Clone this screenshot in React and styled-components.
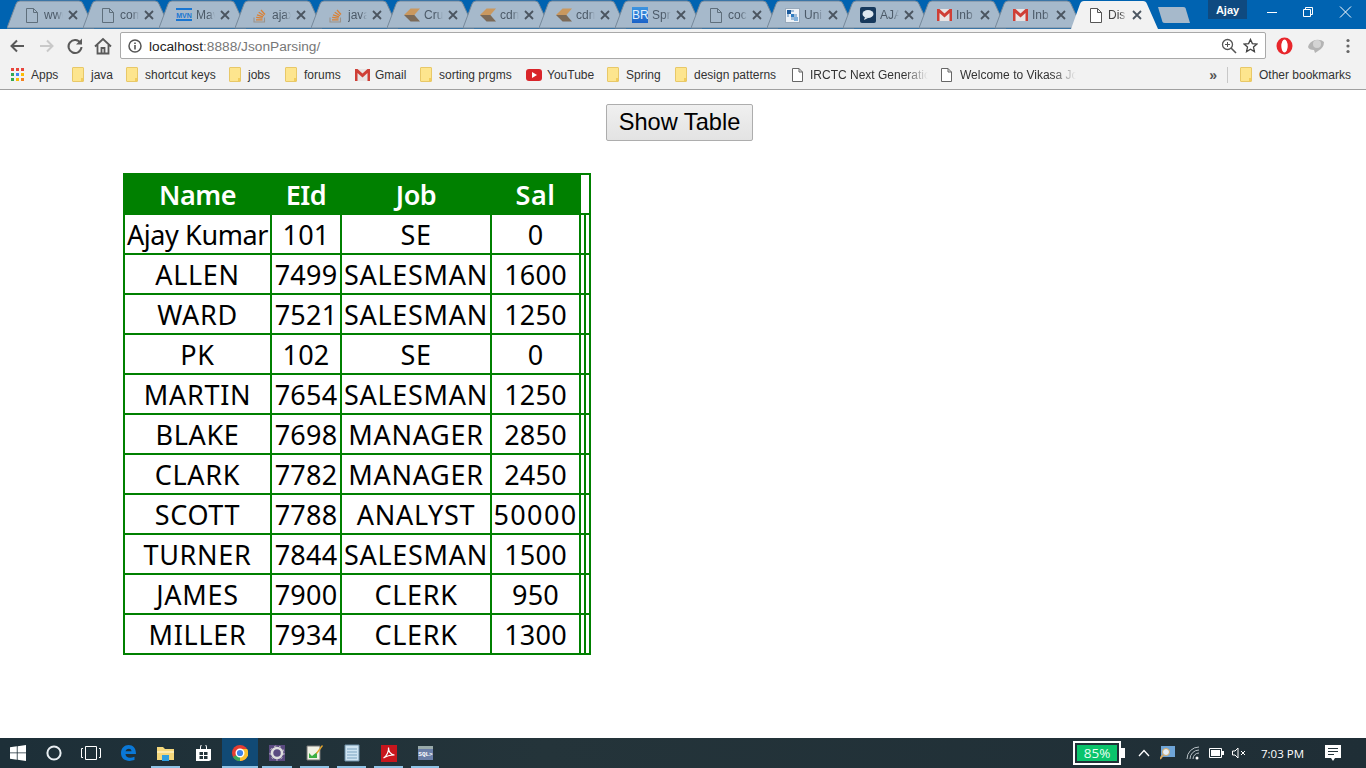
import React from "react";
import styled, { createGlobalStyle } from "styled-components";

const Global = createGlobalStyle`
  html, body { margin: 0; padding: 0; height: 100%; background: #fff; overflow: hidden; }
  #root { height: 100%; }
`;
const Page = styled.div`
  width: 1366px; height: 768px; display: flex; flex-direction: column;
  font-family: "Liberation Sans", Arial, sans-serif; overflow: hidden;
`;
const TabStrip = styled.div`
  height: 29px; flex: none; background: #0063b1; display: flex; padding-left: 7px; position: relative;
`;
const TabBox = styled.div`
  position: relative; width: 87px; height: 29px; margin-right: -11px; flex: none;
  z-index: ${p => (p.$active ? 3 : 1)};
`;
const TabShape = styled.svg`position: absolute; inset: 0;`;
const TabIcon = styled.div`
  position: absolute; left: 17px; top: 7px; width: 16px; height: 16px; display: flex; align-items: center; justify-content: center;
`;
const TabTitle = styled.span`
  position: absolute; left: 37px; top: 8px; width: 19px; overflow: hidden; white-space: nowrap;
  font-size: 12px; line-height: 15px; color: ${p => (p.$active ? "#444" : "#4c5a68")};
  -webkit-mask-image: linear-gradient(90deg, #000 65%, transparent 100%);
  mask-image: linear-gradient(90deg, #000 65%, transparent 100%);
`;
const TabClose = styled.svg`position: absolute; left: 61px; top: 10px;`;
const NewTab = styled.svg`position: absolute; left: 1157px; top: 6px; z-index: 1;`;
const Profile = styled.div`
  position: absolute; left: 1208px; top: 0; width: 39px; height: 19px; background: #0f4a80; color: #fff;
  font-size: 11px; font-weight: bold; display: flex; align-items: center; justify-content: center;
`;
const WinBtn = styled.svg`position: absolute; top: 5px;`;
const Toolbar = styled.div`
  height: 33px; flex: none; background: #f2f2f2; display: flex; align-items: center; position: relative; padding-left: 9px; box-sizing: border-box;
`;
const NavIcon = styled.svg`flex: none; margin-right: ${p => p.$mr || 0}px;`;
const Omnibox = styled.div`
  width: 1146px; height: 27px; box-sizing: border-box; background: #fff; border: 1px solid #a9a9a9; border-radius: 2px;
  display: flex; align-items: center; padding: 0 7px 0 7px; flex: none; margin: 0 10px 0 0;
`;
const Url = styled.span`
  flex: 1; margin-left: 7px; font-size: 13.7px; color: #777; white-space: nowrap; padding-top: 1px;
  b { font-weight: normal; color: #222; }
`;
const BookmarkBar = styled.div`
  height: 28px; flex: none; background: #f2f2f2; border-bottom: 1px solid #a0a0a0; box-sizing: border-box;
  display: flex; align-items: center; padding: 0 0 2px 11px; position: relative;
`;
const Bookmark = styled.div`
  width: ${p => p.$w}px; flex: none; display: flex; align-items: center; gap: ${p => p.$gap || 7}px;
  font-size: 12px; color: #333; white-space: nowrap; overflow: hidden;
`;
const FadeLabel = styled.span`
  width: ${p => p.$w}px; overflow: hidden;
  -webkit-mask-image: linear-gradient(90deg, #000 80%, transparent 100%);
  mask-image: linear-gradient(90deg, #000 80%, transparent 100%);
`;
const BarRight = styled.div`
  margin-left: auto; display: flex; align-items: center; font-size: 12px; color: #333;
`;
const Chevrons = styled.span`font-size: 14px; font-weight: bold; color: #555; width: 11px; text-align: right; margin-right: 10px; line-height: 14px;`;
const Sep = styled.div`width: 1px; height: 16px; background: #c8c8c8; margin-right: 12px;`;
const Other = styled.div`display: flex; align-items: center; gap: 7px; width: 126px;`;
const Content = styled.main`
  flex: 1; background: #fff; display: flex; flex-direction: column; min-height: 0;
`;
const ButtonRow = styled.div`display: flex; justify-content: center; padding: 14px 7px 0 0;`;
const ShowButton = styled.button`
  width: 147px; height: 37px; box-sizing: border-box; padding: 0; border: 1px solid #adadad; border-radius: 2px;
  background: linear-gradient(#f0f0f0, #e3e3e3); font: 23.6px "Liberation Sans", Arial, sans-serif; color: #000;
`;
const Table = styled.table`
  border-collapse: collapse; table-layout: fixed; width: 466px; margin: 32px 0 0 123px;
  font-family: "Noto Sans", sans-serif; color: #000;
  th, td { border: 2px solid green; text-align: center; white-space: nowrap; overflow: hidden; }
`;
const Head = styled.th`
  height: 38px; padding: 0; font-size: 27px; font-weight: 600; letter-spacing: ${p => p.$ls ?? -0.5}px; background: ${p => (p.$blank ? "#fff" : "green")}; color: #fff;
`;
const Cell = styled.td`
  height: 36px; padding: 2px 0 0; font-size: 27px; font-weight: 400; line-height: 36px; letter-spacing: ${p => p.$ls || 0}px;
`;
const Taskbar = styled.footer`
  height: 30px; flex: none; background: linear-gradient(90deg, #1d2f38, #24343a 40%, #1f2e36 100%); display: flex; align-items: stretch; position: relative;
`;
const TaskSlot = styled.div`
  width: ${p => p.$w || 37}px; flex: none; display: flex; align-items: center; justify-content: center; position: relative;
  background: ${p => (p.$active ? "#114a75" : "transparent")};
  ${p => p.$open ? `&::after { content: ""; position: absolute; left: ${p.$active ? 0 : 4}px; right: ${p.$active ? 0 : 4}px; bottom: 0; height: 2px; background: #8fc3e6; }` : ""}
`;
const Battery = styled.div`
  position: absolute; left: 1073px; top: 3px; width: 48px; height: 24px; box-sizing: border-box; border: 2px solid #fff; padding: 2px;
  display: flex; &::after { content: ""; position: absolute; right: -6px; top: 5px; width: 4px; height: 10px; background: #fff; }
`;
const BatteryFill = styled.div`
  flex: 1; background: #0ac46b; color: #e8fff4; font-size: 13.5px; line-height: 16px; text-align: center; font-family: "Open Sans", sans-serif;
`;
const Tray = styled.div`position: absolute; top: 0; height: 30px; display: flex; align-items: center; left: ${p => p.$x}px;`;
const Clock = styled.span`color: #fff; font-size: 11.5px; font-family: "Open Sans", sans-serif;`;
const Txt = styled.span`
  color: ${p => p.$c}; font-size: ${p => p.$s}px; font-weight: bold; background: ${p => p.$bg}; width: 16px; height: 16px;
  line-height: 16px; text-align: center; display: block; overflow: hidden; white-space: nowrap;
`;

const Doc = ({ c = "#5f6f7c" }) => (
  <svg width="12" height="15" viewBox="0 0 12 15"><path d="M.5.5h7l4 4v10H.5zM7.5.5v4h4" fill="#fff" fillOpacity={c === "#555" ? 1 : 0} stroke={c} /></svg>
);
const Mvn = () => (
  <svg width="16" height="16" viewBox="0 0 16 16"><rect y="1" width="16" height="2" fill="#1976d2" /><rect y="12" width="16" height="2" fill="#1976d2" /><text x="8" y="10.500" fontSize="7" fontWeight="bold" textAnchor="middle" fill="#1976d2" fontFamily="Liberation Sans">MVN</text></svg>
);
const So = () => (
  <svg width="16" height="16" viewBox="0 0 16 16"><path d="M2 10.500V15h10.500v-4.500" fill="none" stroke="#9c938a" strokeWidth="1.100" /><path d="M4 12.800h6.500M4.200 10.300l6.300.8M5 7.800l6 2M6.700 5.300l5.300 3.400M9 3l4 4.500" stroke="#d98136" strokeWidth="1.300" fill="none" /></svg>
);
const Cdr = () => (
  <svg width="17" height="14" viewBox="0 0 17 14"><path d="M0 7 7 0h10l-6 7z" fill="#c9985f" /><path d="M0 7l7 7h10l-6-7z" fill="#7b6a58" /></svg>
);
const Uni = () => (
  <svg width="15" height="15" viewBox="0 0 15 15"><rect x=".5" y=".5" width="14" height="14" fill="#eef3f8" stroke="#9ab" /><path d="M2 2h4v4H2z" fill="#1a5a9c" /><path d="M6 6h3v3H6z" fill="#2f7cc0" /><path d="M9 9h4v4H9z" fill="#7fb0dc" /><path d="M6 2h3v2H6zM2 6h2v3H2zM9 6h3v3H9zM6 9h3v3H6z" fill="#9fbcd8" /></svg>
);
const Chat = () => (
  <svg width="16" height="16" viewBox="0 0 16 16"><rect width="16" height="16" rx="2" fill="#17395c" /><ellipse cx="8" cy="7" rx="5.500" ry="4" fill="#dfe8f0" /><path d="M5 10l-1 3 4-2z" fill="#dfe8f0" /></svg>
);
const GmailIcon = ({ w = 15, h = 12 }) => (
  <svg width={w} height={h} viewBox="0 0 15 12"><path d="M0 0h15v12H0z" fill="#e8e4e4" /><path d="M0 0h2.500l5 4.500 5-4.500H15v12h-2.500V4l-5 4.500L2.500 4v8H0z" fill="#cf3f36" /></svg>
);
const Folder = () => (
  <svg width="12" height="15" viewBox="0 0 12 15"><path d="M1 .5h10a.5.5 0 0 1 .5.5v13a.5.5 0 0 1-.5.5H1a.5.5 0 0 1-.5-.5V1A.5.5 0 0 1 1 .5z" fill="#fde58e" stroke="#e8c868" /><rect x="9" y="11" width="2" height="3" fill="#f2cd5c" /></svg>
);
const BmDoc = () => (
  <svg width="11" height="14" viewBox="0 0 11 14"><path d="M.5.5h6.500l3.500 3.500v9.500H.5zM7 .5V4h3.500" fill="#fff" stroke="#666" /></svg>
);
const AppsIcon = () => (
  <svg width="13" height="13" viewBox="0 0 13 13">
    {[["#e8453c","#e8453c","#e8453c"],["#34a853","#4285f4","#fbbc05"],["#34a853","#fbbc05","#f58220"]].flatMap((r, y) =>
      r.map((c, x) => <rect key={`${x}${y}`} x={x * 5} y={y * 5} width="3" height="3" fill={c} />))}
  </svg>
);
const Yt = () => (
  <svg width="16" height="12" viewBox="0 0 16 12"><rect width="16" height="12" rx="3" fill="#d9252a" /><path d="M6 3l5 3-5 3z" fill="#fff" /></svg>
);

const tabs = [
  ["www", <Doc />], ["com", <Doc />], ["Mav", <Mvn />], ["ajax", <So />], ["java", <So />], ["Cru", <Cdr />],
  ["cdn", <Cdr />], ["cdn", <Cdr />],
  ["Spr", <Txt $c="#dfefff" $s={12} $bg="linear-gradient(#3d95e0,#1b62c8)" style={{ fontWeight: 400 }}>BR</Txt>],
  ["coc", <Doc />], ["Uni", <Uni />], ["AJA", <Chat />], ["Inb", <GmailIcon />], ["Inb", <GmailIcon />],
  ["Dis", <Doc c="#555" />],
];

const Tab = ({ title, icon, active }) => (
  <TabBox $active={active}>
    <TabShape width="87" height="29" viewBox="0 0 87 29">
      <path
        d={active ? "M0 29 9 4Q10 1 13 1H72q3 0 4 3L87 29z" : "M0 28 9 4Q10 1 13 1H72q3 0 4 3L87 28z"}
        fill={active ? "#f2f2f2" : "#a6b9cb"}
        stroke={active ? "none" : "#76889a"}
        strokeWidth="1"
      />
    </TabShape>
    <TabIcon>{icon}</TabIcon>
    <TabTitle $active={active}>{title}</TabTitle>
    <TabClose width="10" height="10" viewBox="0 0 10 10"><path d="M1 1l8 8M9 1 1 9" stroke="#4b5560" strokeWidth="1.800" /></TabClose>
  </TabBox>
);

const bookmarks = [
  [61, <AppsIcon />, "Apps", 7],
  [54, <Folder />, "java"],
  [103, <Folder />, "shortcut keys"],
  [56, <Folder />, "jobs"],
  [70, <Folder />, "forums", 7],
  [65, <GmailIcon />, "Gmail", 5],
  [106, <Folder />, "sorting prgms", 7],
  [81, <Yt />, "YouTube", 5],
  [68, <Folder />, "Spring", 7],
  [117, <Folder />, "design patterns", 7],
  [149, <BmDoc />, "IRCTC Next Generation", 7, 118],
  [150, <BmDoc />, "Welcome to Vikasa Jobs", 8, 116],
];

const rows = [
  ["Ajay Kumar", 101, "SE", 0], ["ALLEN", 7499, "SALESMAN", 1600], ["WARD", 7521, "SALESMAN", 1250],
  ["PK", 102, "SE", 0], ["MARTIN", 7654, "SALESMAN", 1250], ["BLAKE", 7698, "MANAGER", 2850],
  ["CLARK", 7782, "MANAGER", 2450], ["SCOTT", 7788, "ANALYST", 50000], ["TURNER", 7844, "SALESMAN", 1500],
  ["JAMES", 7900, "CLERK", 950], ["MILLER", 7934, "CLERK", 1300],
];

/* The reference font sets capitals a little wider and lower case a little tighter than Noto Sans. */
const spacingFor = v => {
  if (v === 50000) return 1.4;
  if (typeof v === "number") return 0.2;
  if (v === "Ajay Kumar") return -0.4;
  return 0.7;
};

const colWidths = [147, 70, 150, 89, 5, 5];

export default function App() {
  return (
    <Page>
      <Global />
      <TabStrip>
        {tabs.map(([t, ic], i) => <Tab key={i} title={t} icon={ic} active={i === 14} />)}
        <NewTab width="34" height="18" viewBox="0 0 34 18"><path d="M1 1h25q2 0 2.500 1L33 17H8q-2 0-2.500-1z" fill="#a6b9cb" /></NewTab>
        <Profile>Ajay</Profile>
        <WinBtn style={{ left: 1266 }} width="12" height="14" viewBox="0 0 12 14"><path d="M1 7.500h10" stroke="#fff" /></WinBtn>
        <WinBtn style={{ left: 1302 }} width="12" height="14" viewBox="0 0 12 14"><path d="M1.500 4.500h7v7h-7zM3.500 4.500v-2h7v7h-2" fill="none" stroke="#fff" /></WinBtn>
        <WinBtn style={{ left: 1339 }} width="13" height="14" viewBox="0 0 13 14"><path d="M1 1.500l11 11M12 1.500l-11 11" stroke="#fff" /></WinBtn>
      </TabStrip>
      <Toolbar>
        <NavIcon $mr={10} width="18" height="18" viewBox="0 0 18 18"><path d="M15 9H3M8 3.500 2.500 9 8 14.500" fill="none" stroke="#5a5a5a" strokeWidth="2" /></NavIcon>
        <NavIcon $mr={11} width="18" height="18" viewBox="0 0 18 18"><path d="M3 9h12M10 3.500 15.500 9 10 14.500" fill="none" stroke="#c9c9c9" strokeWidth="2" /></NavIcon>
        <NavIcon $mr={10} width="18" height="18" viewBox="0 0 18 18"><path d="M14.500 6A6.500 6.500 0 1 0 15.500 10" fill="none" stroke="#5a5a5a" strokeWidth="2" /><path d="M16 1.500V7.500h-6z" fill="#5a5a5a" /></NavIcon>
        <NavIcon $mr={8} width="18" height="18" viewBox="0 0 18 18"><path d="M1 9.500 9 2l8 7.500M3.500 8v8.500h11V8M7.500 16.500V11h3v5.500" fill="none" stroke="#5a5a5a" strokeWidth="1.800" /></NavIcon>
        <Omnibox>
          <svg width="14" height="14" viewBox="0 0 14 14"><circle cx="7" cy="7" r="6" fill="none" stroke="#555" strokeWidth="1.500" /><path d="M7 6v4.500M7 3.500v1.500" stroke="#555" strokeWidth="1.600" /></svg>
          <Url><b>localhost</b>:8888/JsonParsing/</Url>
          <svg width="16" height="16" viewBox="0 0 16 16" style={{ marginRight: 6 }}><circle cx="6.500" cy="6.500" r="5" fill="none" stroke="#555" strokeWidth="1.300" /><path d="M10 10l5 5" stroke="#555" strokeWidth="1.600" /><path d="M6.500 4v5M4 6.500h5" stroke="#555" /></svg>
          <svg width="15" height="15" viewBox="0 0 16 16"><path d="M8 1.500l2 4.500 4.800.5-3.600 3.200 1 4.800L8 12l-4.200 2.500 1-4.800L1.200 6.500 6 6z" fill="none" stroke="#444" strokeWidth="1.400" /></svg>
        </Omnibox>
        <NavIcon $mr={14} width="17" height="18" viewBox="0 0 17 18"><ellipse cx="8.500" cy="9" rx="8" ry="8.500" fill="#e8262b" /><ellipse cx="8.500" cy="9" rx="3.200" ry="6.500" fill="#fff" /></NavIcon>
        <NavIcon $mr={21} width="18" height="16" viewBox="0 0 18 16"><path d="M1 9q1-5 7-7 6-1 9 2 0 6-6 9l-3 2-1-3Q2 12 1 9z" fill="#b4b4b4" /><circle cx="10" cy="6" r="4" fill="#d4d4d4" /></NavIcon>
        <NavIcon width="4" height="16" viewBox="0 0 4 16"><circle cx="2" cy="2.500" r="1.600" fill="#666" /><circle cx="2" cy="8" r="1.600" fill="#666" /><circle cx="2" cy="13.500" r="1.600" fill="#666" /></NavIcon>
      </Toolbar>
      <BookmarkBar>
        {bookmarks.map(([w, ic, label, gap, fade], i) => (
          <Bookmark key={i} $w={w} $gap={gap}>{ic}{fade ? <FadeLabel $w={fade}>{label}</FadeLabel> : <span>{label}</span>}</Bookmark>
        ))}
        <BarRight>
          <Chevrons>»</Chevrons>
          <Sep />
          <Other><Folder /><span>Other bookmarks</span></Other>
        </BarRight>
      </BookmarkBar>
      <Content>
        <ButtonRow><ShowButton>Show Table</ShowButton></ButtonRow>
        <Table>
          <colgroup>{colWidths.map((w, i) => <col key={i} style={{ width: w }} />)}</colgroup>
          <thead>
            <tr>
              <Head>Name</Head><Head>EId</Head><Head>Job</Head><Head $ls={0.5}>Sal</Head><Head $blank colSpan={2} />
            </tr>
          </thead>
          <tbody>
            {rows.map((r, i) => (
              <tr key={i}>{r.map((v, j) => <Cell key={j} $ls={spacingFor(v)}>{v}</Cell>)}<Cell /><Cell /></tr>
            ))}
          </tbody>
        </Table>
      </Content>
      <Taskbar>
        <TaskSlot $w={36}>
          <svg width="16" height="16" viewBox="0 0 16 16"><path d="M0 2.300 6.800 1.300v6.200H0zM7.600 1.200 16 0v7.500H7.600zM0 8.300h6.800v6.400L0 13.700zM7.600 8.300H16V16l-8.400-1.200z" fill="#fff" /></svg>
        </TaskSlot>
        <TaskSlot $w={36}>
          <svg width="16" height="16" viewBox="0 0 16 16"><circle cx="8" cy="8" r="6.600" fill="none" stroke="#e8eef2" strokeWidth="2" /></svg>
        </TaskSlot>
        <TaskSlot $w={37}>
          <svg width="20" height="14" viewBox="0 0 20 14"><path d="M4.500.500h11v13h-11z" fill="none" stroke="#fff" /><path d="M2 2.500H.5v9H2M18 2.500h1.500v9H18" fill="none" stroke="#fff" /></svg>
        </TaskSlot>
        <TaskSlot $w={38}>
          <svg width="16" height="16" viewBox="0 0 16 16"><path d="M1 8C1 3 4.500 0 8.500 0 13 0 16 3 16 9H5.500c0 3 3.500 5 9 2.800v3.300c-7 2.200-13.500 0-13.500-7zM5.500 6.300h6C11.500 3 6.500 3 5.500 6.300z" fill="#0a78d7" /></svg>
        </TaskSlot>
        <TaskSlot $w={37} $open>
          <svg width="17" height="15" viewBox="0 0 17 15"><path d="M0 1h6l2 2h9v11H0z" fill="#f4d77c" /><path d="M0 5h17v2H0z" fill="#fbeab0" /><path d="M5 9h7v6H5z" fill="#2f9fe0" /></svg>
        </TaskSlot>
        <TaskSlot $w={38}>
          <svg width="15" height="16" viewBox="0 0 15 16"><path d="M0 4h15v11l-2 1H0z" fill="#fff" /><path d="M4.500 4V2a3 3 0 0 1 6 0v2" fill="none" stroke="#fff" /><path d="M3.500 7h3.500v3H3.500zM8 7h3.500v3H8zM3.500 11h3.500v3H3.500zM8 11h3.500v3H8z" fill="#24343a" /></svg>
        </TaskSlot>
        <TaskSlot $w={36} $active $open>
          <svg width="16" height="16" viewBox="0 0 16 16"><circle cx="8" cy="8" r="8" fill="#e53d32" /><path d="M8 8 1 12a8 8 0 0 0 7.500 4z" fill="#3aa757" /><path d="M8 4h7.200A8 8 0 0 1 8 16z" fill="#fbc02d" /><circle cx="8" cy="8" r="3.800" fill="#3f82e8" stroke="#fff" strokeWidth="1.400" /></svg>
        </TaskSlot>
        <TaskSlot $w={38} $open>
          <svg width="18" height="18" viewBox="0 0 18 18"><rect x="1" y="1" width="16" height="16" fill="#5a4a80" /><circle cx="9" cy="9" r="5" fill="none" stroke="#ddd" strokeWidth="2.500" /><circle cx="9" cy="9" r="7" fill="none" stroke="#ccc" strokeWidth="1" strokeDasharray="2 3" /></svg>
        </TaskSlot>
        <TaskSlot $w={37} $open>
          <svg width="18" height="18" viewBox="0 0 18 18"><path d="M1 2h13v14H1z" fill="#f2f2e6" stroke="#777" /><path d="M3 9l3 3 5-4v6H3z" fill="#3cae43" /><path d="M10 9l6-8 1 1-6 8z" fill="#e6a52a" /></svg>
        </TaskSlot>
        <TaskSlot $w={37} $open>
          <svg width="16" height="18" viewBox="0 0 16 18"><path d="M1 1h14v16H1z" fill="#cfe4f2" stroke="#6d8fa8" /><path d="M3 5h10M3 8h10M3 11h10M3 14h10" stroke="#7ba3c0" /></svg>
        </TaskSlot>
        <TaskSlot $w={37} $open>
          <svg width="16" height="17" viewBox="0 0 16 17"><rect width="16" height="17" fill="#c8161d" /><path d="M2.500 13C6 11 8 6 7.500 2.500c0 4 2 7 6 7.500-4 0-8 1-11 3z" fill="none" stroke="#fff" strokeWidth="1.200" /></svg>
        </TaskSlot>
        <TaskSlot $w={36} $open>
          <svg width="15" height="14" viewBox="0 0 15 14"><rect width="15" height="14" fill="#6b7fa8" /><rect y="0" width="15" height="3" fill="#9aa" /><text x="7.500" y="9.500" fontSize="6" fontWeight="bold" textAnchor="middle" fill="#fff" fontFamily="Liberation Mono">SQL&gt;</text></svg>
        </TaskSlot>
        <Battery><BatteryFill>85%</BatteryFill></Battery>
        <Tray $x={1138}><svg width="12" height="8" viewBox="0 0 12 8"><path d="M1 7l5-5.500L11 7" fill="none" stroke="#fff" strokeWidth="1.300" /></svg></Tray>
        <Tray $x={1160}><svg width="15" height="15" viewBox="0 0 15 15"><rect x="1" width="14" height="11" fill="#6fa5d8" /><circle cx="6" cy="6" r="3.500" fill="#e3eef8" stroke="#d9a860" /><path d="M3 9l-3 4" stroke="#d9a860" strokeWidth="2" /></svg></Tray>
        <Tray $x={1186}><svg width="14" height="14" viewBox="0 0 14 14"><path d="M1 13A12 12 0 0 1 13 1M4 13a9 9 0 0 1 9-9M7 13a6 6 0 0 1 6-6" fill="none" stroke="#b9c2c7" strokeWidth="1" /><circle cx="11" cy="12" r="1.500" fill="#fff" /></svg></Tray>
        <Tray $x={1209}><svg width="15" height="10" viewBox="0 0 15 10"><path d="M.5.500h12v9H.5z" fill="none" stroke="#fff" /><rect x="2" y="2" width="9" height="6" fill="#fff" /><rect x="13" y="3" width="2" height="4" fill="#fff" /></svg></Tray>
        <Tray $x={1232}><svg width="14" height="12" viewBox="0 0 14 12"><path d="M.5 4h2.500L6 1v10L3 8H.5z" fill="none" stroke="#fff" /><path d="M9 4l4 4M13 4l-4 4" stroke="#fff" /></svg></Tray>
        <Tray $x={1261}><Clock>7:03 PM</Clock></Tray>
        <Tray $x={1325}><svg width="16" height="16" viewBox="0 0 16 16"><path d="M0 0h16v13h-6l-2 3-2-3H0z" fill="#fff" /><path d="M3 3.500h10M3 6.500h10M3 9.500h6" stroke="#24343a" /></svg></Tray>
      </Taskbar>
    </Page>
  );
}
